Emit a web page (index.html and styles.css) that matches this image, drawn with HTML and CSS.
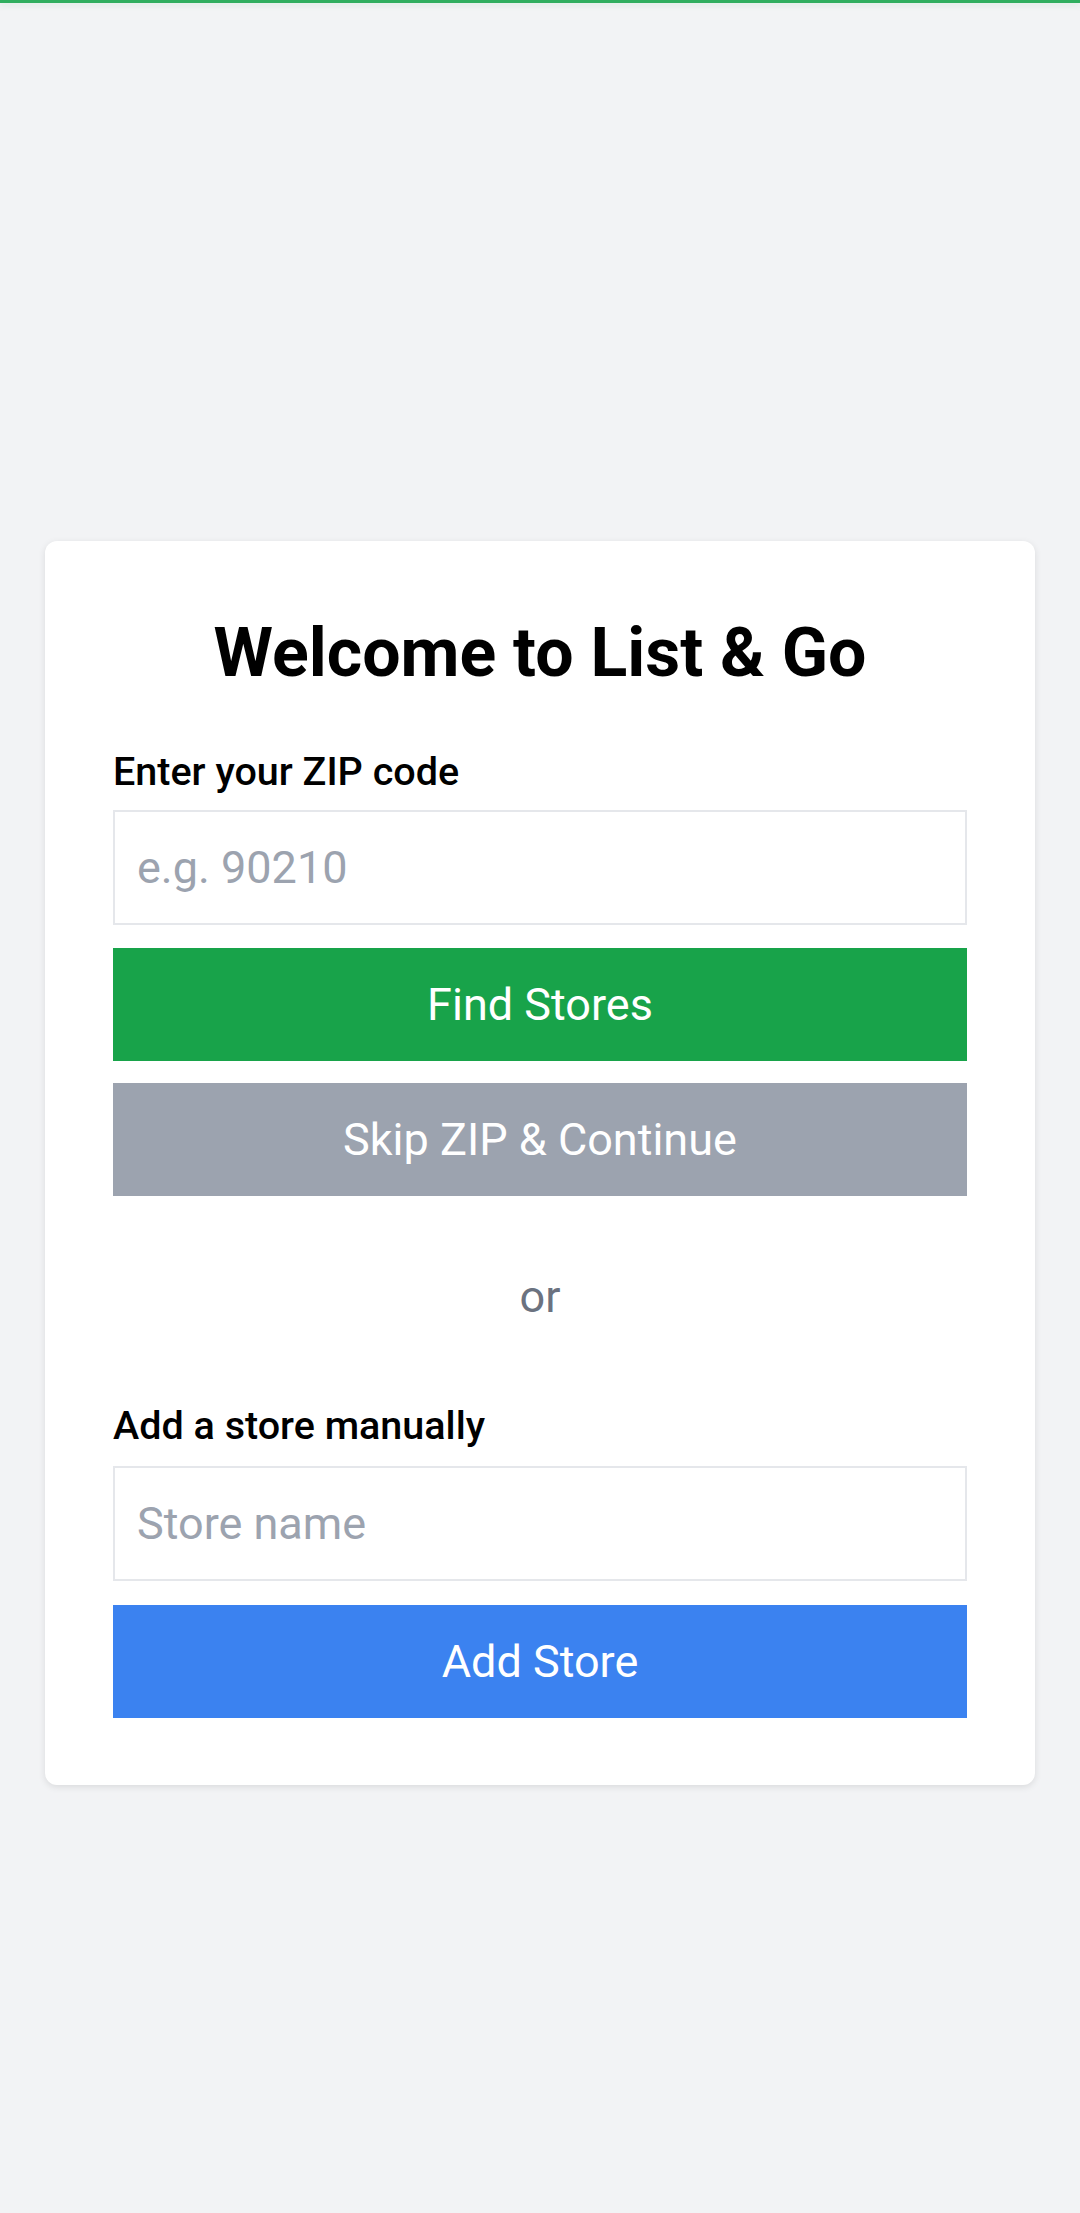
FILE: index.html
```html
<!DOCTYPE html>
<html lang="en">
<head>
<meta charset="utf-8">
<title>List &amp; Go</title>
<link rel="stylesheet" href="styles.css">
</head>
<body>
<div class="topbar"></div>
<main class="page">
  <section class="card">
    <h1 class="title">Welcome to List &amp; Go</h1>
    <label class="label" for="zip">Enter your ZIP code</label>
    <input class="field" id="zip" type="text" placeholder="e.g. 90210">
    <button class="btn btn-green">Find Stores</button>
    <button class="btn btn-gray">Skip ZIP &amp; Continue</button>
    <p class="or">or</p>
    <label class="label" for="store">Add a store manually</label>
    <input class="field field-store" id="store" type="text" placeholder="Store name">
    <button class="btn btn-blue">Add Store</button>
  </section>
</main>
</body>
</html>
```

FILE: styles.css
```css
* { box-sizing: border-box; }

html, body {
  margin: 0;
  padding: 0;
}

body {
  background: #f2f3f5;
  font-family: Roboto, "Liberation Sans", Arial, sans-serif;
  min-height: 2213px;
}

.topbar {
  height: 3px;
  background: #2fae5f;
  box-shadow: 0 2px 6px rgba(47, 174, 95, 0.15);
}

.page {
  padding: 538px 45px 0;
}

.card {
  background: #ffffff;
  border-radius: 12px;
  box-shadow: 0 2px 7px rgba(0, 0, 0, 0.1);
  padding: 72px 68px 67px;
  display: flex;
  flex-direction: column;
}

.title {
  margin: 0;
  font-size: 68px;
  line-height: 80px;
  font-weight: 700;
  color: #000;
  text-align: center;
}

.label {
  display: block;
  margin-top: 58px;
  font-size: 39.5px;
  line-height: 41px;
  font-weight: 500;
  color: #000;
}

.field {
  display: block;
  width: 100%;
  height: 115px;
  margin-top: 18px;
  border: 2px solid #e5e7eb;
  border-radius: 0;
  padding: 0 22px;
  font-family: inherit;
  font-size: 45px;
  color: #111827;
  background: #fff;
  outline: none;
}

.field::placeholder {
  color: #9ca3af;
}

.field-store {
  margin-top: 20px;
}

.btn {
  display: block;
  width: 100%;
  height: 113px;
  border: none;
  border-radius: 0;
  font-family: inherit;
  font-size: 45px;
  font-weight: 400;
  color: #ffffff;
  padding: 0;
  cursor: pointer;
}

.btn-green {
  margin-top: 23px;
  background: #18a34a;
}

.btn-gray {
  margin-top: 22px;
  background: #9ca3af;
}

.btn-blue {
  margin-top: 24px;
  background: #3b82f0;
}

.or {
  margin: 75px 0 0;
  font-size: 45px;
  line-height: 52px;
  color: #6b7280;
  text-align: center;
}

.or + .label {
  margin-top: 82px;
}
```
